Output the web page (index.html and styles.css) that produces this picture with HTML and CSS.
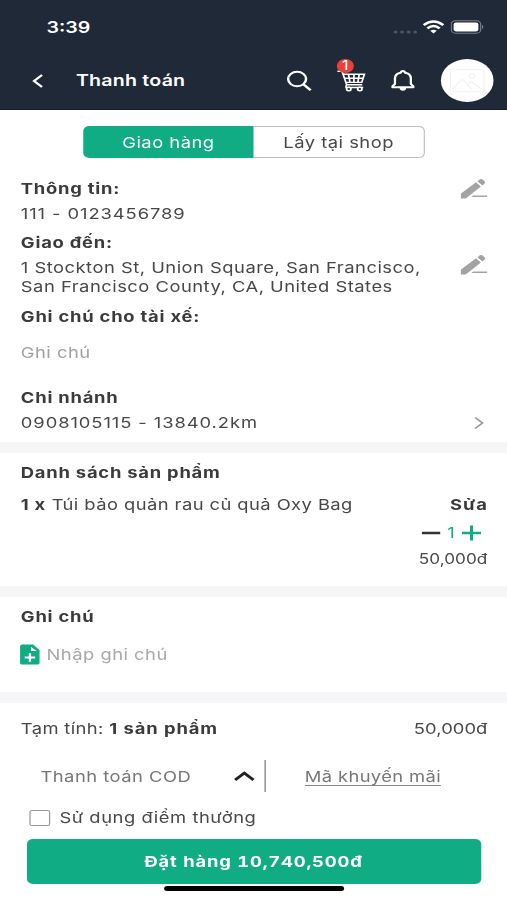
FILE: index.html
```html
<!DOCTYPE html>
<html lang="vi">
<head>
<meta charset="utf-8">
<title>Thanh toán</title>
<link rel="stylesheet" href="styles.css">
</head>
<body>
<div class="screen">
  <header class="header">
    <div class="status">
      <span class="time">3:39</span>
      <svg class="signal" width="24" height="14" viewBox="0 0 24 14" fill="#4d5763"><circle cx="2" cy="12" r="1.6"/><circle cx="7.3" cy="12" r="1.6"/><circle cx="12.7" cy="12" r="1.6"/><circle cx="18" cy="12" r="1.6"/></svg>
      <svg class="wifi" width="18" height="14" viewBox="0 0 18 14" fill="none" stroke="#fff" stroke-width="2.4"><path d="M1 5.2Q9-2 17 5.2"/><path d="M4 8.4Q9 3.8 14 8.4"/><path d="M6.4 10.7Q9 8.7 11.6 10.7L9 13.4Z" fill="#fff" stroke="none"/></svg>
      <svg class="battery" width="27" height="14" viewBox="0 0 27 14"><rect x=".5" y=".8" width="24" height="12.4" rx="3.4" fill="none" stroke="#77808a"/><rect x="2.4" y="2.6" width="20.2" height="8.8" rx="1.8" fill="#fff"/><path d="M25.6 5v4q1.2-.6 1.2-2t-1.2-2" fill="#77808a"/></svg>
    </div>
    <nav class="nav">
      <svg class="back" width="10" height="16" viewBox="0 0 10 16" fill="none" stroke="#fff" stroke-width="2"><path d="M8.3 2 1.800 8l6.500 6"/></svg>
      <h1 class="title">Thanh toán</h1>
      <svg class="search" width="21" height="22" viewBox="0 0 21 22" fill="none" stroke="#fff" stroke-width="2"><circle cx="8.600" cy="9" r="7.300"/><path d="m13.700 14.200 6 6" stroke-width="2.300"/></svg>
      <div class="cart">
        <svg width="24" height="22" viewBox="0 0 24 22" fill="none" stroke="#fff" stroke-width="1.400"><path d="M.5 1.200h3.800l3.800 13.600h12.700M5.200 4.300h17.400l-2.200 8.100H7.500M6.200 8.200h15.300M9.600 4.300l1.200 8.100M14 4.300v8.100M18.300 4.300l-1.100 8.100M7.600 15.200v2.300h14"/><circle cx="9.800" cy="19" r="1.800" fill="#1f2937"/><circle cx="18.800" cy="19" r="1.800" fill="#1f2937"/></svg>
        <span class="badge">1</span>
      </div>
      <svg class="bell" width="20" height="22" viewBox="0 0 20 22" fill="none" stroke="#fff" stroke-width="1.900" stroke-linejoin="round"><path d="M1.500 17.300v-1l2-2.500V8.500Q3.700 3.300 8.300 2.700 8.500 1 10 1t1.700 1.700q4.600.6 4.800 5.800v5.300l2 2.500v1Z"/><path d="M7.300 18q.2 2.800 2.700 2.800t2.700-2.800Z" fill="#fff" stroke="none"/></svg>
      <div class="avatar"><svg width="29" height="24" viewBox="0 0 29 24" fill="none" stroke="#f1f1f1"><rect x=".8" y=".8" width="27.400" height="22" rx="1"/><path d="m2 20.500 8.500-10.500 8 10.500M14.500 15.500l3-3 9.500 8"/><circle cx="18.500" cy="7" r="2.300"/></svg></div>
    </nav>
  </header>

  <div class="tabs">
    <button class="tab tab-active">Giao hàng</button>
    <button class="tab">Lấy tại shop</button>
  </div>

  <section class="delivery">
    <div class="row info">
      <div><h2>Thông tin:</h2><p class="contact">111 - 0123456789</p></div>
      <svg class="edit" width="22" height="21" viewBox="0 0 22 21" fill="#a3a3a3"><path d="M.2 15.800 12.700 4.200l4 4.200L4.300 20.400H.2ZM13.900 3.300l2-2q.9-.8 1.800 0l2.200 2.200q.8.900 0 1.700l-2 2.200Z"/><path d="M10.500 17.400h11.300v1.700H8.800Z"/></svg>
    </div>
    <div class="row address">
      <div><h2>Giao đến:</h2><p class="lines">1 Stockton St, Union Square, San Francisco,<br>San Francisco County, CA, United States</p></div>
      <svg class="edit" width="22" height="21" viewBox="0 0 22 21" fill="#a3a3a3"><path d="M.2 15.800 12.700 4.200l4 4.200L4.300 20.400H.2ZM13.900 3.300l2-2q.9-.8 1.800 0l2.200 2.200q.8.900 0 1.700l-2 2.200Z"/><path d="M10.500 17.400h11.300v1.700H8.800Z"/></svg>
    </div>
    <h2 class="driver">Ghi chú cho tài xế:</h2>
    <p class="hint">Ghi chú</p>
    <h2 class="branch">Chi nhánh</h2>
    <div class="row branch-row">
      <p class="contact">0908105115 - 13840.2km</p>
      <svg class="chevron" width="10" height="14" viewBox="0 0 10 14" fill="none" stroke="#999" stroke-width="1.500"><path d="m2 1.500 6 5.500-6 5.500"/></svg>
    </div>
  </section>

  <section class="products">
    <h2 class="list-title">Danh sách sản phẩm</h2>
    <div class="row product">
      <p><b>1 x</b> <span class="name">Túi bảo quản rau củ quả Oxy Bag</span></p>
      <b class="change">Sửa</b>
    </div>
    <div class="stepper">
      <svg width="16" height="18" viewBox="0 0 16 18" stroke="#333" stroke-width="2.400"><path d="M.5 9h15"/></svg>
      <span class="qty">1</span>
      <svg width="16" height="18" viewBox="0 0 16 18" stroke="#10ac84" stroke-width="2.500"><path d="M0 9h16M8 1.500v15"/></svg>
    </div>
    <p class="price">50,000đ</p>
  </section>

  <section class="note">
    <h2 class="note-title">Ghi chú</h2>
    <div class="note-field">
      <svg width="17" height="21" viewBox="0 0 17 21"><path d="M2 .5h9L16.300 6v13q0 1.500-1.500 1.500H2Q.4 20.500.4 19V2Q.4.500 2 .5Z" fill="#10ac84"/><path d="M9.300 3v4h4.800Z" fill="#fff"/><path d="M4.200 13.500h8.500M8.450 9.300v8.400" stroke="#fff" stroke-width="1.900"/></svg>
      <span class="placeholder">Nhập ghi chú</span>
    </div>
  </section>

  <footer class="summary">
    <div class="row subtotal"><p><span class="sub">Tạm tính:</span> <b class="count">1 sản phẩm</b></p><p class="total">50,000đ</p></div>
    <div class="payment">
      <div class="method"><span class="cod">Thanh toán COD</span><svg width="17" height="12" viewBox="0 0 17 12" fill="none" stroke="#222" stroke-width="2.600"><path d="m1 10 7.500-7 7.500 7"/></svg></div>
      <div class="promo"><span class="code">Mã khuyến mãi</span></div>
    </div>
    <div class="points"><i class="box"></i><span class="reward">Sử dụng điểm thưởng</span></div>
    <button class="order"><span>Đặt hàng 10,740,500đ</span></button>
    <div class="home"></div>
  </footer>
</div>
</body>
</html>
```
FILE: styles.css
```css
* { box-sizing: border-box; }
html, body { margin: 0; overflow: hidden; background: #fff; }
body { width: 507px; height: 900px; }

/* 414-point layout stretched to the window width */
.screen {
  width: 414px; height: 900px;
  transform: scaleX(1.22464); transform-origin: 0 0;
  display: flex; flex-direction: column;
  font-family: Inter, "Liberation Sans", sans-serif;
  font-size: 15px; line-height: 20px; letter-spacing: .4px; color: #484848;
}
h1, h2, p { margin: 0; }
h2 { font-size: 15px; line-height: 20px; font-weight: 650; letter-spacing: .63px; color: #3b3b3b; }
b { font-weight: 650; letter-spacing: .6px; color: #3b3b3b; }
p { white-space: nowrap; }
svg { display: block; flex: none; }
button { font: inherit; letter-spacing: inherit; border: 0; padding: 0; color: inherit; background: none; }
.row { display: flex; justify-content: space-between; }

.header { height: 110px; background: #1f2937; color: #fff; border-bottom: 1px solid #131c29; }
.status { height: 54px; display: flex; align-items: center; padding: 0 19px 0 38px; }
.time { font-size: 16px; font-weight: 600; flex: 1; letter-spacing: 0; }
.battery { margin-left: 5px; }
.nav { height: 54px; display: flex; align-items: center; padding: 0 11px 0 26px; }
.title { margin: -2px 0 0 26px; flex: 1; font-size: 16px; font-weight: 600; letter-spacing: .18px; }
.cart { position: relative; margin-left: 20px; }
.badge {
  position: absolute; top: -11px; left: 0; width: 14px; height: 14px;
  border-radius: 50%; background: #e9423a; font-size: 13px; line-height: 13px; text-align: center; letter-spacing: 0;
}
.bell { margin-left: 20px; }
.avatar { margin: -1px 0 0 21px; width: 43px; height: 43px; border-radius: 50%; background: #fff; display: grid; place-items: center; }

.tabs { display: flex; margin: 16px 67px 0 68px; height: 32px; flex: none; }
.tab { flex: 1; border: 1px solid #bfbfbf; border-left: 0; border-radius: 0 5px 5px 0; padding-top: 1px; }
.tab-active { border: 0; border-radius: 5px 0 0 5px; background: #10ac84; color: #fff; }

.delivery { padding: 21px 16px 0 17px; height: 284px; flex: none; }
.info h2 { margin-bottom: 4.500px; }
.contact { letter-spacing: .75px; }
.edit { margin-top: -1px; }
.address { margin-top: 9.500px; }
.address .edit { margin-top: 21px; }
.address h2 { height: 24px; }
.lines { line-height: 19px; margin-top: 1px; }
.driver { margin-top: 10.500px; height: 20px; }
.hint { margin-top: 16.500px; color: #a0a0a0; }
.branch { margin-top: 25px; }
.branch-row { margin-top: 4.500px; align-items: center; padding-right: 2.500px; }

.products { border-top: 11px solid #f6f6f8; height: 144px; padding: 10px 16px 0 17px; flex: none; }
.product { margin-top: 12px; }
.name { letter-spacing: .35px; }
.change { letter-spacing: .9px; margin-right: -.5px; }
.stepper { display: flex; justify-content: flex-end; align-items: center; margin-top: 8px; padding-right: 5px; }
.qty { width: 17px; text-align: center; color: #10ac84; }
.price { text-align: right; font-size: 14px; margin-top: 6px; letter-spacing: .05px; }
.total { letter-spacing: .05px; }

.note { border-top: 11px solid #f6f6f8; height: 106px; padding: 10px 16px 0 17px; flex: none; }
.note-field { display: flex; align-items: center; gap: 5px; margin-top: 17px; color: #a8a8a8; margin-left: -1px; }

.summary { border-top: 11px solid #f6f6f8; padding-top: 16px; }
.subtotal { padding: 0 16px 0 17px; }
.sub { letter-spacing: .3px; }
.count { letter-spacing: .75px; }
.payment { display: flex; height: 32px; margin-top: 21px; color: #777; }
.method { width: 217px; border-right: 1.500px solid #777; display: flex; align-items: center; justify-content: space-between; padding: 0 8.500px 0 33px; }
.cod { margin-top: 1px; }
.promo { flex: 1; display: flex; align-items: center; justify-content: center; padding-right: 22px; }
.code { border-bottom: 1px solid #888; line-height: 17px; height: 18px; margin-top: 2px; letter-spacing: .3px; }
.points { display: flex; align-items: center; gap: 7.500px; margin: 16px 0 0 24px; }
.box { width: 17px; height: 16px; border: 1.600px solid #999; border-radius: 2px; }
.reward { letter-spacing: .44px; }
.order { display: block; width: 371px; height: 45px; margin: 11px 0 0 21.500px; border-radius: 5px; background: #10ac84; color: #fff; font-weight: 700; letter-spacing: .65px; font-variant-numeric: tabular-nums; }
.home { width: 147px; height: 5px; margin: 2px 0 0 134px; border-radius: 3px; background: #000; }
```
